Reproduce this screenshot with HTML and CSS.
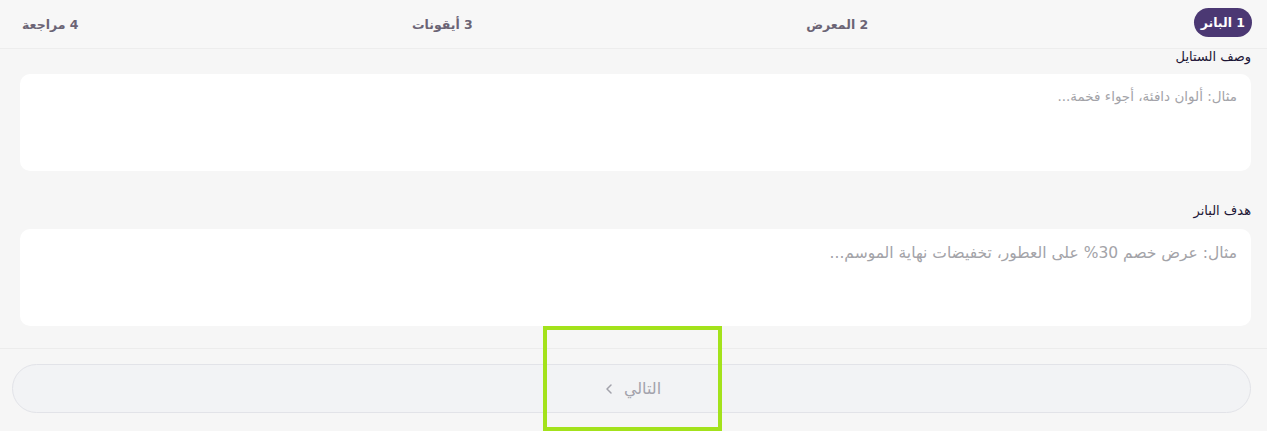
FILE: index.html
```html
<!DOCTYPE html>
<html lang="ar" dir="rtl">
<head>
  <meta charset="UTF-8">
  <title>إنشاء بانر</title>
  <link rel="stylesheet" href="styles.css">
</head>
<body>

  <div class="steps">
    <span class="step active">1 البانر</span>
    <span class="step">2 المعرض</span>
    <span class="step">3 أيقونات</span>
    <span class="step">4 مراجعة</span>
  </div>

  <div class="form">
    <div class="field">
      <label for="style-desc">وصف الستايل</label>
      <textarea id="style-desc" class="small" placeholder="مثال: ألوان دافئة، أجواء فخمة..."></textarea>
    </div>

    <div class="field">
      <label for="banner-goal">هدف البانر</label>
      <textarea id="banner-goal" placeholder="مثال: عرض خصم 30% على العطور، تخفيضات نهاية الموسم..."></textarea>
    </div>
  </div>

  <div class="footer">
    <button class="next-btn" disabled>
      التالي
      <svg width="14" height="14" viewBox="0 0 14 14" fill="none" stroke="currentColor" stroke-width="1.5" stroke-linecap="round" stroke-linejoin="round"><path d="M9 3 L5 7 L9 11"/></svg>
    </button>
  </div>

  <div class="highlight"></div>

</body>
</html>
```

FILE: styles.css
```css
body {
  margin: 0;
  font-family: 'DejaVu Sans', 'Noto Sans', sans-serif;
  background: #f6f6f6;
  color: #1c1535;
  height: 431px;
  overflow: hidden;
  position: relative;
}

.steps {
  height: 48px;
  display: flex;
  justify-content: space-between;
  align-items: center;
  padding: 0 15px 0 14px;
  border-bottom: 1px solid #ededed;
  background: #f7f7f7;
}

.step {
  font-size: 12.5px;
  font-weight: bold;
  color: #6b6475;
  padding: 6px 8px;
  border-radius: 999px;
}

.step.active {
  background: #4b3873;
  color: #ffffff;
  padding: 7px 7px;
  margin-top: -4px;
}

.form {
  padding: 0 16px 0 20px;
}

.field {
  margin-bottom: 32px;
}

.field:last-child {
  margin-bottom: 0;
}

label {
  display: block;
  font-size: 13px;
  line-height: 16px;
  margin-bottom: 9px;
}

.field + .field label {
  margin-bottom: 10px;
}

textarea {
  display: block;
  box-sizing: border-box;
  width: 100%;
  height: 97px;
  border: none;
  border-radius: 10px;
  background: #ffffff;
  padding: 12px 14px;
  font-family: inherit;
  font-size: 15.5px;
  line-height: 24px;
  resize: none;
  color: #1c1535;
}

textarea.small {
  font-size: 13.5px;
  line-height: 20px;
}

textarea::placeholder {
  color: #a3a3a8;
}

.footer {
  margin-top: 22px;
  border-top: 1px solid #ececec;
  padding: 15px 16px 0 12px;
}

.next-btn {
  width: 100%;
  height: 49px;
  border: 1px solid #e2e3e8;
  border-radius: 999px;
  background: #f2f3f5;
  color: #a2a2ab;
  font-family: inherit;
  font-size: 16px;
  display: flex;
  align-items: center;
  justify-content: center;
  gap: 8px;
}

.highlight {
  position: absolute;
  left: 543px;
  top: 326px;
  width: 171px;
  height: 97px;
  border: 4px solid #a3e21b;
  pointer-events: none;
}
```
